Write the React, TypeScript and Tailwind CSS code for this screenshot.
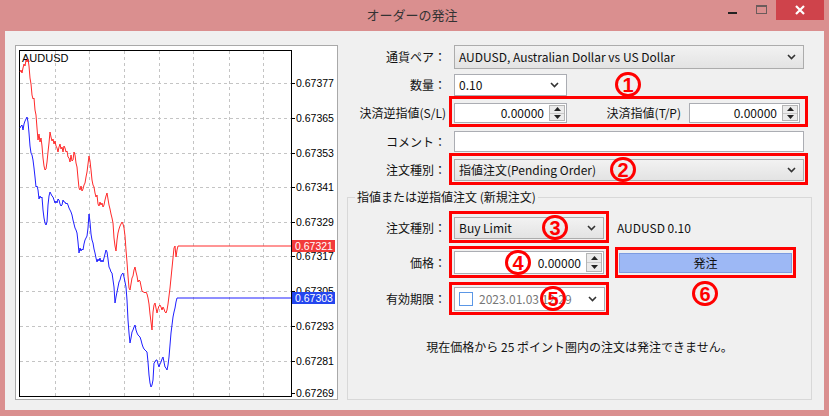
import clsx from "clsx";

const RED_PTS =
  "20,72 21,70 22,73 23,68 24,64 25,66 26,60 27,62 28,59 29,66 30,78 31,84 32,95 33,99 34,98 35,110 36,115 37,128 38,140 39,134 40,142 41,138 42,146 43,158 44,166 45,170 46,169 47,162 48,152 49,143 50,132 51,137 52,141 53,139 54,144 55,141 56,146 57,148 58,152 59,147 60,144 61,149 62,147 63,152 64,146 65,148 66,152 67,151 68,157 69,158 70,162 71,155 72,161 73,160 74,152 75,155 76,163 77,167 78,178 79,188 80,190 81,186 82,191 83,189 84,185 85,183 86,177 87,172 88,164 89,156 90,161 91,170 92,180 93,185 94,187 95,193 96,197 97,195 98,204 99,206 100,202 101,205 102,203 103,207 104,205 105,200 106,196 107,193 108,199 109,205 110,209 111,214 112,218 113,223 114,238 115,246 116,251 117,240 118,233 119,229 120,226 121,224 122,222 123,224 124,228 125,236 126,250 127,262 128,276 129,288 130,290 131,284 132,278 133,276 134,270 135,267 136,272 137,276 138,282 139,280 140,281 141,286 142,291 143,292 144,292 145,293 146,292 147,294 148,298 149,304 150,314 151,322 152,330 153,312 154,305 155,303 156,308 157,313 158,309 159,306 160,305 161,307 162,310 163,307 164,309 165,312 166,313 167,310 168,304 169,296 170,288 171,278 172,268 173,258 174,248 175,246 176,257 177,250 178,246 291,246";

const BLUE_PTS =
  "20,128 21,126 22,125 23,130 24,124 25,121 26,119 27,117 28,122 29,133 30,146 31,153 32,155 33,160 34,168 35,177 36,187 37,186 38,190 39,199 40,196 41,198 42,197 43,210 44,218 45,223 46,225 47,222 48,205 49,196 50,192 51,194 52,196 53,197 54,200 55,203 56,201 57,203 58,199 59,200 60,204 61,206 62,205 63,200 64,202 65,202 66,204 67,203 68,205 69,208 70,210 71,212 72,215 73,220 74,224 75,228 76,230 77,233 78,242 79,253 80,248 81,251 82,249 83,250 84,244 85,240 86,238 87,236 88,228 89,214 90,222 91,234 92,240 93,243 94,249 95,253 96,258 97,262 98,259 99,261 100,258 101,262 102,260 103,262 104,258 105,254 106,250 107,252 108,259 109,267 110,269 111,272 112,273 113,280 114,287 115,303 116,297 117,292 118,287 119,282 120,280 121,276 122,274 123,273 124,277 125,282 126,287 127,300 128,320 129,333 130,343 131,338 132,332 133,330 134,327 135,325 136,330 137,333 138,335 139,336 140,337 141,340 142,344 143,347 144,349 145,350 146,351 147,352 148,362 149,375 150,383 151,387 152,385 153,380 154,363 155,362 156,360 157,360 158,364 159,367 160,364 161,362 162,359 163,357 164,362 165,367 166,368 167,370 168,365 169,357 170,345 171,333 172,325 173,317 174,312 175,308 176,302 177,298 291,298";

const H_GRID = [83, 118, 153, 187, 222, 256, 291, 326, 361];
const V_GRID = [55, 89, 124, 159, 193, 229, 263];
const PRICES: [number, string][] = [
  [83, "0.67377"],
  [118, "0.67365"],
  [153, "0.67353"],
  [187, "0.67341"],
  [222, "0.67329"],
  [256, "0.67317"],
  [291, "0.67305"],
  [326, "0.67293"],
  [361, "0.67281"],
  [393, "0.67269"],
];

function PriceChart() {
  return (
    <div className="ml-[10px] mt-[14px] h-[355px] w-[323px] shrink-0 border border-[#a9a9a9] bg-white">
      <svg width="321" height="353" viewBox="16 46 321 353" className="block">
        {H_GRID.map((y) => (
          <line key={y} x1="20" x2="291" y1={y + 0.5} y2={y + 0.5} stroke="#c4c4c4" strokeDasharray="3 3" />
        ))}
        {V_GRID.map((x) => (
          <line key={x} x1={x + 0.5} x2={x + 0.5} y1="51" y2="396" stroke="#c4c4c4" strokeDasharray="3 3" />
        ))}
        <rect x="19.5" y="50.5" width="272" height="346" fill="none" stroke="#000" />
        {PRICES.map(([y]) => (
          <line key={y} x1="291" x2="295" y1={y + 0.5} y2={y + 0.5} stroke="#000" />
        ))}
        <g fontFamily="'Liberation Sans', Arial, sans-serif" fontSize="10.5" fill="#000">
          {PRICES.map(([y, p]) => (
            <text key={p} x="296" y={y + 4}>
              {p}
            </text>
          ))}
          <text x="22" y="62" fontSize="11">
            AUDUSD
          </text>
        </g>
        <polyline points={RED_PTS} fill="none" stroke="#ff2a2a" strokeWidth="1" />
        <polyline points={BLUE_PTS} fill="none" stroke="#1f1fff" strokeWidth="1" />
        <rect x="292" y="240" width="43" height="12" fill="#f23b3b" />
        <rect x="292" y="292" width="43" height="12" fill="#2446ee" />
        <g fontFamily="'Liberation Sans', Arial, sans-serif" fontSize="10.5" fill="#fff">
          <text x="295" y="250">0.67321</text>
          <text x="295" y="302">0.67303</text>
        </g>
      </svg>
    </div>
  );
}

function Chevron() {
  return (
    <svg width="9" height="6" viewBox="0 0 9 6" className="shrink-0">
      <path d="M1 1l3.5 3.5L8 1" fill="none" stroke="#333" strokeWidth="1.6" />
    </svg>
  );
}

function Select({ text, white, className }: { text: string; white?: boolean; className: string }) {
  return (
    <div
      className={clsx(
        "flex h-full items-center justify-between border pl-[4px] pr-[7px]",
        white ? "border-[#abadb3] bg-white" : "border-[#acacac] bg-linear-to-b from-[#f2f2f2] to-[#e3e3e3]",
        className,
      )}
    >
      <span>{text}</span>
      <Chevron />
    </div>
  );
}

function Spinner() {
  return (
    <div className="my-[1px] mr-[1px] flex w-[16px] shrink-0 flex-col border border-[#b5b5b5] bg-[#ebebeb]">
      <div className="flex flex-1 items-center justify-center border-b border-[#c9c9c9]">
        <svg width="7" height="4" viewBox="0 0 7 4">
          <path d="M0 4L3.5 0L7 4Z" fill="#222" />
        </svg>
      </div>
      <div className="flex flex-1 items-center justify-center">
        <svg width="7" height="4" viewBox="0 0 7 4">
          <path d="M0 0L7 0L3.5 4Z" fill="#222" />
        </svg>
      </div>
    </div>
  );
}

function NumberField({ className }: { className: string }) {
  return (
    <div className={clsx("flex h-full border border-[#abadb3] bg-white", className)}>
      <div className="flex flex-1 items-center justify-end pr-[5px]">0.00000</div>
      <Spinner />
    </div>
  );
}

function Label({ children, className }: { children: string; className?: string }) {
  return <span className={clsx("shrink-0 text-right", className ?? "w-[99px]")}>{children}</span>;
}

function WindowButtons() {
  return (
    <div className="flex flex-1 items-start justify-end pr-[5px]">
      <div className="flex h-[20px] w-[27px] justify-center pt-[12px]">
        <div className="h-[2px] w-[9px] bg-[#222]" />
      </div>
      <div className="flex h-[20px] w-[30px] justify-center pt-[5px]">
        <div className="h-[9px] w-[11px] border border-t-2 border-[#6b5b5b]" />
      </div>
      <div className="flex h-[20px] w-[48px] items-center justify-center bg-[#cf434b]">
        <svg width="10" height="10" viewBox="0 0 10 10">
          <path d="M1 1L9 9M9 1L1 9" stroke="#fff" strokeWidth="2.2" />
        </svg>
      </div>
    </div>
  );
}

const MARKS = [
  "left-[444px] top-[65px] w-[359px] h-[31px]",
  "left-[444px] top-[122px] w-[359px] h-[32px]",
  "left-[444px] top-[180px] w-[160px] h-[32px]",
  "left-[444px] top-[215px] w-[160px] h-[32px]",
  "left-[444px] top-[251px] w-[160px] h-[33px]",
  "left-[610px] top-[216px] w-[181px] h-[31px]",
];

const CIRCLES: [string, string][] = [
  ["1", "left-[610px] top-[41px]"],
  ["2", "left-[605px] top-[126px]"],
  ["3", "left-[537px] top-[184px]"],
  ["4", "left-[500px] top-[219px]"],
  ["5", "left-[535px] top-[255px]"],
  ["6", "left-[687px] top-[250px]"],
];

export default function App() {
  return (
    <div className="flex h-[416px] w-[829px] flex-col bg-[#da8f8f] font-['Noto_Sans_CJK_JP','Liberation_Sans',sans-serif] text-[12px] text-[#111]">
      <div className="flex h-[31px] shrink-0">
        <div className="flex-1" />
        <div className="pt-[6px] text-[13px] leading-[18px] text-[#333]">オーダーの発注</div>
        <WindowButtons />
      </div>

      <div className="flex-1 px-[5px] pb-[6px]">
        <div className="relative flex h-full bg-[#f0f0f0]">
          <PriceChart />

          <div className="ml-[9px] flex w-[465px] flex-col pb-[10px] pt-[14px]">
            <div className="flex h-[24px] items-center">
              <Label>通貨ペア：</Label>
              <Select className="ml-[8px] w-[350px]" text="AUDUSD, Australian Dollar vs US Dollar" />
            </div>
            <div className="mt-[5px] flex h-[22px] items-center">
              <Label>数量：</Label>
              <Select white className="ml-[8px] w-[113px]" text="0.10" />
            </div>
            <div className="mt-[7px] flex h-[20px] items-center">
              <Label>決済逆指値(S/L)</Label>
              <NumberField className="ml-[8px] w-[113px]" />
              <Label className="ml-[36px] w-[78px]">決済指値(T/P)</Label>
              <NumberField className="ml-[8px] w-[111px]" />
            </div>
            <div className="mt-[8px] flex h-[21px] items-center">
              <Label>コメント：</Label>
              <div className="ml-[8px] h-full w-[350px] border border-[#abadb3] bg-white" />
            </div>
            <div className="mt-[7px] flex h-[22px] items-center">
              <Label>注文種別：</Label>
              <Select className="ml-[8px] w-[350px]" text="指値注文(Pending Order)" />
            </div>

            <fieldset className="mt-[8px] flex-1 border border-[#d8d8d8]">
              <legend className="ml-[7px] px-[2px] leading-[16px]">指値または逆指値注文 (新規注文)</legend>
              <div className="flex flex-col pt-[12px]">
                <div className="flex h-[22px] items-center">
                  <Label className="w-[98px]">注文種別：</Label>
                  <Select className="ml-[8px] w-[150px]" text="Buy Limit" />
                  <span className="ml-[13px]">AUDUSD 0.10</span>
                </div>
                <div className="mt-[12px] flex h-[23px] items-center">
                  <Label className="w-[98px]">価格：</Label>
                  <NumberField className="ml-[8px] w-[150px]" />
                  <button className="ml-[15px] h-[20px] w-[173px] border border-[#7d9be0] bg-[#9db8f5] text-[12px] leading-[18px] text-[#111]">
                    発注
                  </button>
                </div>
                <div className="mt-[13px] flex h-[24px] items-center">
                  <Label className="w-[98px]">有効期限：</Label>
                  <div className="ml-[8px] flex h-full w-[151px] items-center border border-[#abadb3] bg-white pl-[4px] pr-[7px]">
                    <div className="h-[14px] w-[14px] border border-[#5b97e6] bg-white" />
                    <span className="ml-[6px] flex-1 text-[#777]">2023.01.03 12:29</span>
                    <Chevron />
                  </div>
                </div>
                <p className="mt-[28px] text-center leading-[16px]">
                  現在価格から 25 ポイント圏内の注文は発注できません。
                </p>
              </div>
            </fieldset>
          </div>

          {MARKS.map((m) => (
            <div key={m} className={clsx("pointer-events-none absolute border-[3px] border-[#ff0000]", m)} />
          ))}
          {CIRCLES.map(([n, pos]) => (
            <div
              key={n}
              className={clsx(
                "pointer-events-none absolute flex h-[25px] w-[26px] items-center justify-center rounded-full border-[3px] border-[#ff0000] font-['Liberation_Sans',sans-serif] text-[20px] font-bold leading-none text-[#ff0000]",
                pos,
              )}
            >
              {n}
            </div>
          ))}
        </div>
      </div>
    </div>
  );
}
